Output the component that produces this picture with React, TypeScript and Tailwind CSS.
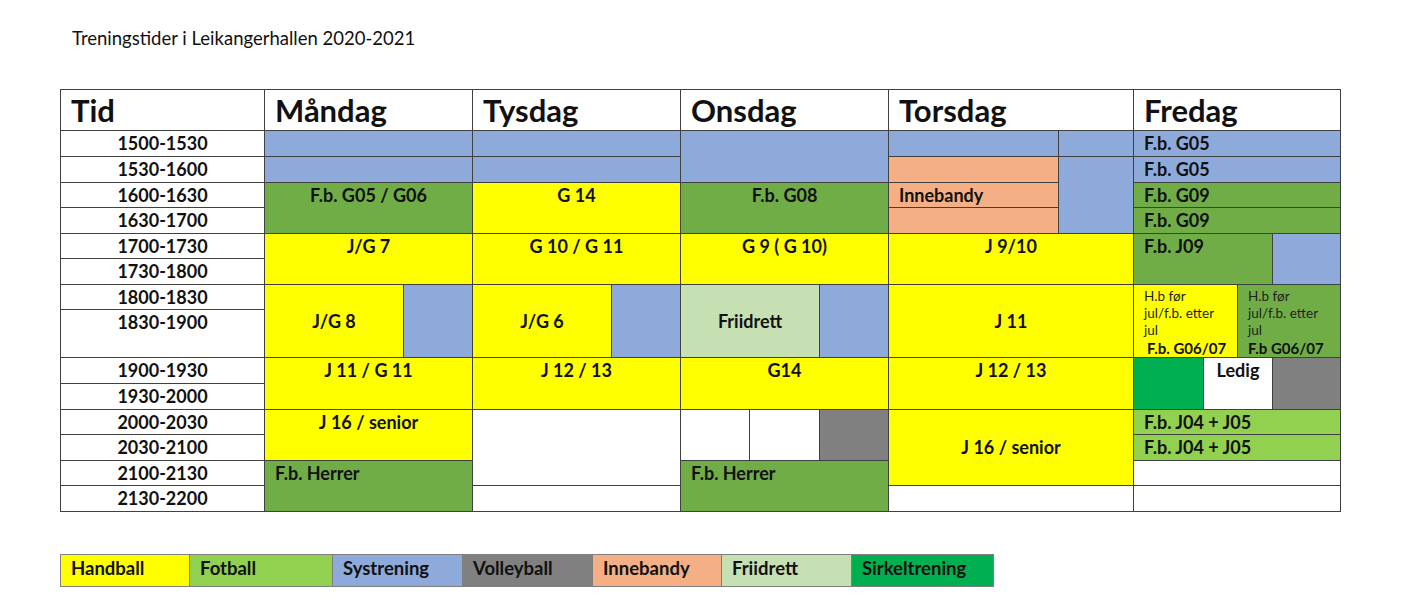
type Align = "top" | "center" | "left" | "none";

type Cell = {
  pos: string;
  bg: string;
  text?: string;
  align?: Align;
};

const BLUE = "bg-[#8eaadb]";
const GREEN = "bg-[#70ad47]";
const YELLOW = "bg-[#ffff00]";
const LIME = "bg-[#92d050]";
const ORANGE = "bg-[#f4b084]";
const GRAY = "bg-[#808080]";
const PALE = "bg-[#c6e0b4]";
const DARK = "bg-[#00b050]";
const WHITE = "bg-white";

const times = [
  "1500-1530",
  "1530-1600",
  "1600-1630",
  "1630-1700",
  "1700-1730",
  "1730-1800",
  "1800-1830",
  "1830-1900",
  "1900-1930",
  "1930-2000",
  "2000-2030",
  "2030-2100",
  "2100-2130",
  "2130-2200",
];

const timeRows = [
  "row-[2/3]",
  "row-[3/4]",
  "row-[4/5]",
  "row-[5/6]",
  "row-[6/7]",
  "row-[7/8]",
  "row-[8/9]",
  "row-[9/10]",
  "row-[10/11]",
  "row-[11/12]",
  "row-[12/13]",
  "row-[13/14]",
  "row-[14/15]",
  "row-[15/16]",
];

const headers = [
  { pos: "col-[1/2] row-[1/2]", text: "Tid" },
  { pos: "col-[2/4] row-[1/2]", text: "Måndag" },
  { pos: "col-[4/6] row-[1/2]", text: "Tysdag" },
  { pos: "col-[6/9] row-[1/2]", text: "Onsdag" },
  { pos: "col-[9/11] row-[1/2]", text: "Torsdag" },
  { pos: "col-[11/15] row-[1/2]", text: "Fredag" },
];

const cells: Cell[] = [
  // Måndag
  { pos: "col-[2/4] row-[2/3]", bg: BLUE },
  { pos: "col-[2/4] row-[3/4]", bg: BLUE },
  { pos: "col-[2/4] row-[4/6]", bg: GREEN, text: "F.b. G05 / G06" },
  { pos: "col-[2/4] row-[6/8]", bg: YELLOW, text: "J/G 7" },
  { pos: "col-[2/3] row-[8/10]", bg: YELLOW, text: "J/G 8", align: "center" },
  { pos: "col-[3/4] row-[8/10]", bg: BLUE },
  { pos: "col-[2/4] row-[10/12]", bg: YELLOW, text: "J 11 / G 11" },
  { pos: "col-[2/4] row-[12/14]", bg: YELLOW, text: "J 16 / senior" },
  { pos: "col-[2/4] row-[14/16]", bg: GREEN, text: "F.b. Herrer", align: "left" },
  // Tysdag
  { pos: "col-[4/6] row-[2/3]", bg: BLUE },
  { pos: "col-[4/6] row-[3/4]", bg: BLUE },
  { pos: "col-[4/6] row-[4/6]", bg: YELLOW, text: "G 14" },
  { pos: "col-[4/6] row-[6/8]", bg: YELLOW, text: "G 10 / G 11" },
  { pos: "col-[4/5] row-[8/10]", bg: YELLOW, text: "J/G 6", align: "center" },
  { pos: "col-[5/6] row-[8/10]", bg: BLUE },
  { pos: "col-[4/6] row-[10/12]", bg: YELLOW, text: "J 12 / 13" },
  { pos: "col-[4/6] row-[12/15]", bg: WHITE },
  { pos: "col-[4/6] row-[15/16]", bg: WHITE },
  // Onsdag
  { pos: "col-[6/9] row-[2/4]", bg: BLUE },
  { pos: "col-[6/9] row-[4/6]", bg: GREEN, text: "F.b. G08" },
  { pos: "col-[6/9] row-[6/8]", bg: YELLOW, text: "G 9 ( G 10)" },
  { pos: "col-[6/8] row-[8/10]", bg: PALE, text: "Friidrett", align: "center" },
  { pos: "col-[8/9] row-[8/10]", bg: BLUE },
  { pos: "col-[6/9] row-[10/12]", bg: YELLOW, text: "G14" },
  { pos: "col-[6/7] row-[12/14]", bg: WHITE },
  { pos: "col-[7/8] row-[12/14]", bg: WHITE },
  { pos: "col-[8/9] row-[12/14]", bg: GRAY },
  { pos: "col-[6/9] row-[14/16]", bg: GREEN, text: "F.b. Herrer", align: "left" },
  // Torsdag
  { pos: "col-[9/10] row-[2/3]", bg: BLUE },
  { pos: "col-[10/11] row-[2/3]", bg: BLUE },
  { pos: "col-[9/10] row-[3/4]", bg: ORANGE },
  { pos: "col-[10/11] row-[3/6]", bg: BLUE },
  { pos: "col-[9/10] row-[4/5]", bg: ORANGE, text: "Innebandy", align: "left" },
  { pos: "col-[9/10] row-[5/6]", bg: ORANGE },
  { pos: "col-[9/11] row-[6/8]", bg: YELLOW, text: "J 9/10" },
  { pos: "col-[9/11] row-[8/10]", bg: YELLOW, text: "J 11", align: "center" },
  { pos: "col-[9/11] row-[10/12]", bg: YELLOW, text: "J 12 / 13" },
  { pos: "col-[9/11] row-[12/15]", bg: YELLOW, text: "J 16 / senior", align: "center" },
  { pos: "col-[9/11] row-[15/16]", bg: WHITE },
  // Fredag
  { pos: "col-[11/15] row-[2/3]", bg: BLUE, text: "F.b. G05", align: "left" },
  { pos: "col-[11/15] row-[3/4]", bg: BLUE, text: "F.b. G05", align: "left" },
  { pos: "col-[11/15] row-[4/5]", bg: GREEN, text: "F.b. G09", align: "left" },
  { pos: "col-[11/15] row-[5/6]", bg: GREEN, text: "F.b. G09", align: "left" },
  { pos: "col-[11/14] row-[6/8]", bg: GREEN, text: "F.b. J09", align: "left" },
  { pos: "col-[14/15] row-[6/8]", bg: BLUE },
  { pos: "col-[11/12] row-[10/12]", bg: DARK },
  { pos: "col-[12/14] row-[10/12]", bg: WHITE, text: "Ledig" },
  { pos: "col-[14/15] row-[10/12]", bg: GRAY },
  { pos: "col-[11/15] row-[12/13]", bg: LIME, text: "F.b. J04 + J05", align: "left" },
  { pos: "col-[11/15] row-[13/14]", bg: LIME, text: "F.b. J04 + J05", align: "left" },
  { pos: "col-[11/15] row-[14/15]", bg: WHITE },
  { pos: "col-[11/15] row-[15/16]", bg: WHITE },
];

const legend = [
  { label: "Handball", cls: "w-[129px] bg-[#ffff00]" },
  { label: "Fotball", cls: "w-[143px] bg-[#92d050]" },
  { label: "Systrening", cls: "w-[130px] bg-[#8eaadb]" },
  { label: "Volleyball", cls: "w-[130px] bg-[#808080]" },
  { label: "Innebandy", cls: "w-[129px] bg-[#f4b084]" },
  { label: "Friidrett", cls: "w-[130px] bg-[#c6e0b4]" },
  { label: "Sirkeltrening", cls: "w-[142px] bg-[#00b050]" },
];

const alignCls: Record<Align, string> = {
  top: "flex justify-center items-start",
  center: "flex justify-center items-center",
  left: "flex justify-start items-start pl-[10px]",
  none: "",
};

function ScheduleCell({ cell }: { cell: Cell }) {
  const align = cell.align ?? "top";
  return (
    <div className={`${cell.pos} ${cell.bg} ${alignCls[align]} border-r border-b border-[#404040]`}>
      {cell.text && <span className="text-[18px] font-bold leading-[25px] whitespace-nowrap">{cell.text}</span>}
    </div>
  );
}

function SplitNote({ pos, bg, last, pad }: { pos: string; bg: string; last: string; pad: string }) {
  return (
    <div className={`${pos} ${bg} border-r border-b border-[#404040] flex flex-col pt-[3px]`}>
      <div className="pl-[10px] text-[13.5px] leading-[17px] text-[#222]">
        <div>H.b før</div>
        <div className="whitespace-nowrap">jul/f.b. etter</div>
        <div>jul</div>
      </div>
      <div className={`${pad} text-[15px] font-bold leading-[18px] whitespace-nowrap`}>{last}</div>
    </div>
  );
}

export default function App() {
  return (
    <div className="min-h-screen bg-white text-[#111] font-['Lato','Open_Sans',sans-serif]">
      <div className="pt-[26px] pl-[72px] text-[18.5px] leading-[24px]">Treningstider i Leikangerhallen 2020-2021</div>

      <div className="ml-[60px] mt-[39px] w-[1281px] grid grid-cols-[204px_139px_69px_139px_69px_69px_70px_69px_170px_75px_70px_34px_35px_68px] grid-rows-[41px_26px_26px_25px_26px_25px_26px_25px_48px_26px_26px_25px_26px_25px_26px] border-t border-l border-[#404040]">
        {headers.map((h) => (
          <div key={h.text} className={`${h.pos} border-r border-b border-[#404040] bg-white pl-[10px] flex items-center`}>
            <span className="text-[31px] font-bold leading-none">{h.text}</span>
          </div>
        ))}

        {times.map((t, i) => (
          <div key={t} className={`col-[1/2] ${timeRows[i]} border-r border-b border-[#404040] bg-white flex justify-center items-start`}>
            <span className="text-[18px] font-bold leading-[25px]">{t}</span>
          </div>
        ))}

        {cells.map((c, i) => (
          <ScheduleCell key={i} cell={c} />
        ))}

        <SplitNote pos="col-[11/13] row-[8/10]" bg={YELLOW} last="F.b. G06/07" pad="pl-[13px]" />
        <SplitNote pos="col-[13/15] row-[8/10]" bg={GREEN} last="F.b G06/07" pad="pl-[10px]" />
      </div>

      <div className="ml-[60px] mt-[42px] flex border-l border-[#7f7f7f]">
        {legend.map((l) => (
          <div key={l.label} className={`${l.cls} h-[33px] border-t border-b border-r border-[#7f7f7f] pl-[10px]`}>
            <span className="text-[18.5px] font-bold leading-[26px]">{l.label}</span>
          </div>
        ))}
      </div>
    </div>
  );
}
